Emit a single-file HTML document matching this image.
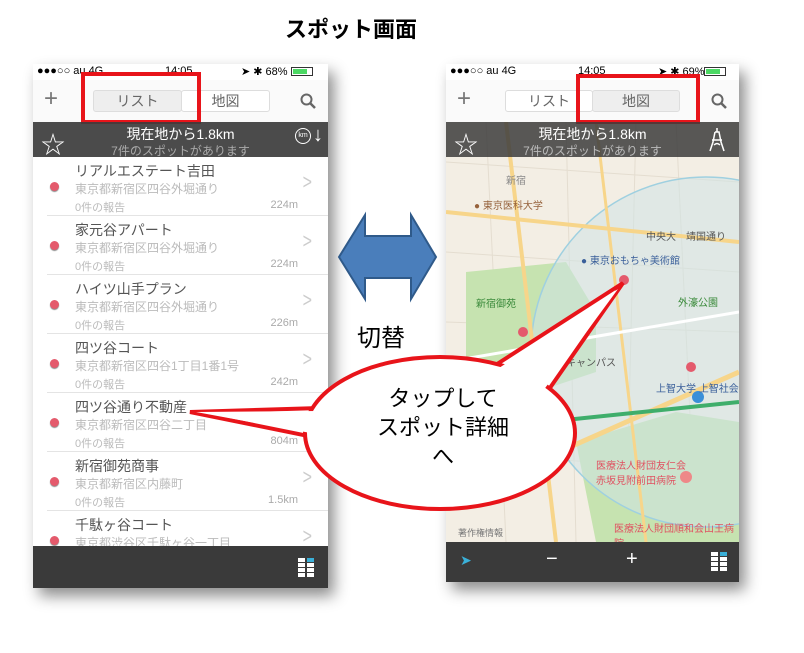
<!DOCTYPE html>
<html><head><meta charset="utf-8"><style>
*{margin:0;padding:0;box-sizing:border-box}
body{width:804px;height:653px;background:#fff;position:relative;overflow:hidden;font-family:"Liberation Sans","Noto Sans CJK JP",sans-serif}
.abs{position:absolute}
.phone{position:absolute;background:#fff;box-shadow:6px 8px 14px rgba(0,0,0,.45);overflow:hidden}
.status{position:absolute;left:0;right:0;top:0;height:16px;font-size:11px;color:#000}
.nav{position:absolute;left:0;right:0;top:16px;height:42px;background:#fafafa}
.seg{position:absolute;top:10px;height:22px;border:1px solid #ddd;border-radius:3px;font-size:14px;color:#666;text-align:center;line-height:20px;background:#fff}
.dark{position:absolute;left:0;right:0;height:35px;background:rgba(60,60,60,.92);color:#fff;text-align:center}
.row{position:absolute;left:14px;right:0;height:59px;border-bottom:1px solid #e4e4e4}
.row .t{position:absolute;left:28px;top:4px;font-size:14px;color:#555}
.row .a{position:absolute;left:28px;top:23px;font-size:12px;color:#bbb}
.row .r{position:absolute;left:28px;top:42px;font-size:11px;color:#bbb}
.row .d{position:absolute;right:30px;top:42px;font-size:11px;color:#aaa}
.row .dot{position:absolute;left:3px;top:25px;width:9px;height:9px;border-radius:50%;background:#e45a6c;box-shadow:0 1px 1px #888}
.row .ch{position:absolute;right:16px;top:18px;font-size:16px;color:#ccc;transform:scaleY(1.3)}
.bar{position:absolute;left:0;right:0;background:#3a3a3a}
</style></head><body>

<div class="abs" style="left:285px;top:12px;font-size:22px;font-weight:bold;color:#000">スポット画面</div>

<!-- LEFT PHONE -->
<div class="phone" style="left:33px;top:64px;width:295px;height:524px">
  <div class="status"><span class="abs" style="left:4px;top:1px">●●●○○ au 4G</span><span class="abs" style="left:132px;top:1px">14:05</span><span class="abs" style="left:208px;top:1px">➤ ✱ 68%</span><span class="abs" style="left:258px;top:3px;width:22px;height:9px;border:1px solid #333"><span class="abs" style="left:1px;top:1px;width:14px;height:5px;background:#4cd964"></span></span></div>
  <div class="nav">
    <div class="abs" style="left:11px;top:5px;font-size:24px;color:#777">+</div>
    <div class="seg" style="left:60px;width:89px;background:#eee">リスト</div>
    <div class="seg" style="left:148px;width:89px">地図</div>
    <svg class="abs" style="left:267px;top:13px" width="16" height="16"><circle cx="6.5" cy="6.5" r="5" fill="none" stroke="#666" stroke-width="2"/><path d="M10 10 L15 15" stroke="#666" stroke-width="2.5"/></svg>
  </div>
  <div class="abs" style="left:48px;top:8px;width:120px;height:52px;border:4px solid #e8141a"></div>
  <div class="dark" style="top:58px">
    <div style="font-size:14px;padding-top:2px">現在地から1.8km</div>
    <div style="font-size:12px;color:#aaa;margin-top:-2px">7件のスポットがあります</div>
    <div class="abs" style="left:8px;top:3px;font-size:24px;color:#fff">☆</div>
    <div class="abs" style="left:262px;top:6px;width:16px;height:16px;border:1.5px solid #fff;border-radius:50%;font-size:7px;line-height:13px">km</div>
    <div class="abs" style="left:280px;top:2px;font-size:20px">↓</div>
  </div>
  <div class="row" style="top:93px"><div class="dot"></div><div class="t">リアルエステート吉田</div><div class="a">東京都新宿区四谷外堀通り</div><div class="r">0件の報告</div><div class="d">224m</div><div class="ch">&gt;</div></div>
  <div class="row" style="top:152px"><div class="dot"></div><div class="t">家元谷アパート</div><div class="a">東京都新宿区四谷外堀通り</div><div class="r">0件の報告</div><div class="d">224m</div><div class="ch">&gt;</div></div>
  <div class="row" style="top:211px"><div class="dot"></div><div class="t">ハイツ山手プラン</div><div class="a">東京都新宿区四谷外堀通り</div><div class="r">0件の報告</div><div class="d">226m</div><div class="ch">&gt;</div></div>
  <div class="row" style="top:270px"><div class="dot"></div><div class="t">四ツ谷コート</div><div class="a">東京都新宿区四谷1丁目1番1号</div><div class="r">0件の報告</div><div class="d">242m</div><div class="ch">&gt;</div></div>
  <div class="row" style="top:329px"><div class="dot"></div><div class="t">四ツ谷通り不動産</div><div class="a">東京都新宿区四谷二丁目</div><div class="r">0件の報告</div><div class="d">804m</div><div class="ch">&gt;</div></div>
  <div class="row" style="top:388px"><div class="dot"></div><div class="t">新宿御苑商事</div><div class="a">東京都新宿区内藤町</div><div class="r">0件の報告</div><div class="d">1.5km</div><div class="ch">&gt;</div></div>
  <div class="row" style="top:447px"><div class="dot"></div><div class="t">千駄ヶ谷コート</div><div class="a">東京都渋谷区千駄ヶ谷一丁目</div><div class="ch">&gt;</div></div>
  <div class="bar" style="top:482px;height:42px">
    <svg class="abs" style="left:265px;top:12px" width="16" height="20"><rect x="0" y="0" width="7" height="4" fill="#fff"/><rect x="9" y="0" width="7" height="4" fill="#3ab0d8"/><rect x="0" y="5" width="7" height="4" fill="#fff"/><rect x="9" y="5" width="7" height="4" fill="#fff"/><rect x="0" y="10" width="7" height="4" fill="#fff"/><rect x="9" y="10" width="7" height="4" fill="#fff"/><rect x="0" y="15" width="7" height="4" fill="#fff"/><rect x="9" y="15" width="7" height="4" fill="#fff"/></svg>
  </div>
</div>

<!-- RIGHT PHONE -->
<div class="phone" style="left:446px;top:64px;width:293px;height:518px">
  <div class="abs" style="left:0;top:58px;width:293px;height:420px;background:#f3eee4">
    <svg width="293" height="420" class="abs" style="left:0;top:0">
      <g stroke="#e4ddd0" stroke-width="1" fill="none">
        <path d="M0 40 L293 60 M0 130 L293 150 M0 200 L293 210 M0 330 L293 350 M40 0 L60 420 M120 0 L130 420 M230 0 L250 420 M190 0 L180 420"/>
      </g>
      <path d="M20 150 L120 140 L150 190 L150 250 L90 270 L20 270Z" fill="#c6e3b0"/>
      <path d="M130 320 L230 290 L293 300 L293 420 L150 420Z" fill="#c6e3b0"/>
      <circle cx="260" cy="230" r="175" fill="#cfe3e6" fill-opacity=".55" stroke="#9fd0e0" stroke-width="1.5"/>
      <path d="M0 90 L293 120" stroke="#f7d58a" stroke-width="4" fill="none"/>
      <path d="M60 0 L110 420" stroke="#f7d58a" stroke-width="4" fill="none"/>
      <path d="M0 380 L293 250" stroke="#f7d58a" stroke-width="5" fill="none"/>
      <path d="M150 0 L200 420" stroke="#f7d58a" stroke-width="3" fill="none"/>
      <path d="M0 240 L293 190" stroke="#fff" stroke-width="3" fill="none"/>
      <path d="M100 300 L293 280" stroke="#3fae6b" stroke-width="4" fill="none"/>
      <circle cx="178" cy="158" r="5" fill="#e45a6c"/>
      <circle cx="77" cy="210" r="5" fill="#e45a6c"/>
      <circle cx="245" cy="245" r="5" fill="#e45a6c"/>
      <circle cx="252" cy="275" r="6" fill="#3a8fd8"/>
      <circle cx="240" cy="355" r="6" fill="#e88"/>
    </svg>
    <div class="abs" style="left:28px;top:75px;font-size:10px;color:#96623c">● 東京医科大学</div>
    <div class="abs" style="left:60px;top:50px;font-size:10px;color:#888">新宿</div>
    <div class="abs" style="left:135px;top:130px;font-size:10px;color:#3a5f9a">● 東京おもちゃ美術館</div>
    <div class="abs" style="left:30px;top:173px;font-size:10px;color:#3a8a3a">新宿御苑</div>
    <div class="abs" style="left:110px;top:232px;font-size:10px;color:#555">町キャンパス</div>
    <div class="abs" style="left:200px;top:106px;font-size:10px;color:#555">中央大　靖国通り</div>
    <div class="abs" style="left:232px;top:172px;font-size:10px;color:#3a8a3a">外濠公園</div>
    <div class="abs" style="left:210px;top:258px;font-size:10px;color:#3a5f9a">上智大学 上智社会</div>
    <div class="abs" style="left:150px;top:335px;font-size:10px;color:#e05060">医療法人財団友仁会<br>赤坂見附前田病院</div>
    <div class="abs" style="left:168px;top:398px;font-size:10px;color:#e05060">医療法人財団順和会山王病院</div>
    <div class="abs" style="left:12px;top:404px;font-size:9px;color:#777">著作権情報</div>
  </div>
  <div class="status"><span class="abs" style="left:4px;top:1px">●●●○○ au 4G</span><span class="abs" style="left:132px;top:1px">14:05</span><span class="abs" style="left:212px;top:1px">➤ ✱ 69%</span><span class="abs" style="left:258px;top:3px;width:22px;height:9px;border:1px solid #333"><span class="abs" style="left:1px;top:1px;width:14px;height:5px;background:#4cd964"></span></span></div>
  <div class="nav">
    <div class="abs" style="left:11px;top:5px;font-size:24px;color:#777">+</div>
    <div class="seg" style="left:59px;width:88px">リスト</div>
    <div class="seg" style="left:146px;width:88px;background:#eee">地図</div>
    <svg class="abs" style="left:265px;top:13px" width="16" height="16"><circle cx="6.5" cy="6.5" r="5" fill="none" stroke="#666" stroke-width="2"/><path d="M10 10 L15 15" stroke="#666" stroke-width="2.5"/></svg>
  </div>
  <div class="abs" style="left:130px;top:10px;width:124px;height:50px;border:4px solid #e8141a"></div>
  <div class="dark" style="top:58px;background:rgba(60,60,60,.85)">
    <div style="font-size:14px;padding-top:2px">現在地から1.8km</div>
    <div style="font-size:12px;color:#bbb;margin-top:-2px">7件のスポットがあります</div>
    <div class="abs" style="left:8px;top:3px;font-size:24px;color:#fff">☆</div>
    <svg class="abs" style="left:263px;top:6px" width="16" height="24"><path d="M8 0 L8 4 M6 4 L10 4 L12 14 L15 23 M6 4 L4 14 L1 23 M3 12 L13 12 M5 17 Q8 14 11 17" stroke="#fff" stroke-width="1.5" fill="none"/></svg>
  </div>
  <div class="bar" style="top:478px;height:40px">
    <div class="abs" style="left:14px;top:10px;font-size:14px;color:#3ab0d8">➤</div>
    <div class="abs" style="left:100px;top:6px;font-size:20px;color:#fff">−</div>
    <div class="abs" style="left:180px;top:6px;font-size:20px;color:#fff">+</div>
    <svg class="abs" style="left:265px;top:10px" width="16" height="20"><rect x="0" y="0" width="7" height="4" fill="#fff"/><rect x="9" y="0" width="7" height="4" fill="#3ab0d8"/><rect x="0" y="5" width="7" height="4" fill="#fff"/><rect x="9" y="5" width="7" height="4" fill="#fff"/><rect x="0" y="10" width="7" height="4" fill="#fff"/><rect x="9" y="10" width="7" height="4" fill="#fff"/><rect x="0" y="15" width="7" height="4" fill="#fff"/><rect x="9" y="15" width="7" height="4" fill="#fff"/></svg>
  </div>
</div>

<!-- arrow + bubble -->
<svg class="abs" style="left:0;top:0" width="804" height="653">
  <path d="M339 257 L365 215 L365 236 L411 236 L411 215 L436 257 L411 299 L411 278 L365 278 L365 299 Z" fill="#4a7ebb" stroke="#2f5a8a" stroke-width="2"/>
  <!-- tails (stroked) -->
  <path d="M480 375 L623 283 L545 395 Z" fill="#fff" stroke="#e8141a" stroke-width="4" stroke-linejoin="miter"/>
  <path d="M320 408 L190 412 L318 438 Z" fill="#fff" stroke="#e8141a" stroke-width="4"/>
  <ellipse cx="440" cy="433" rx="135" ry="76" fill="#fff" stroke="#e8141a" stroke-width="4"/>
  <!-- tail fills over ellipse border -->
  <path d="M484 378 L618 289 L540 395 Z" fill="#fff"/>
  <path d="M318 411 L196 412 L316 434 Z" fill="#fff"/>
</svg>
<div class="abs" style="left:357px;top:318px;font-size:24px;color:#000">切替</div>
<div class="abs" style="left:333px;top:384px;width:220px;text-align:center;font-size:22px;line-height:29px;color:#000">タップして<br>スポット詳細<br>へ</div>
</body></html>
